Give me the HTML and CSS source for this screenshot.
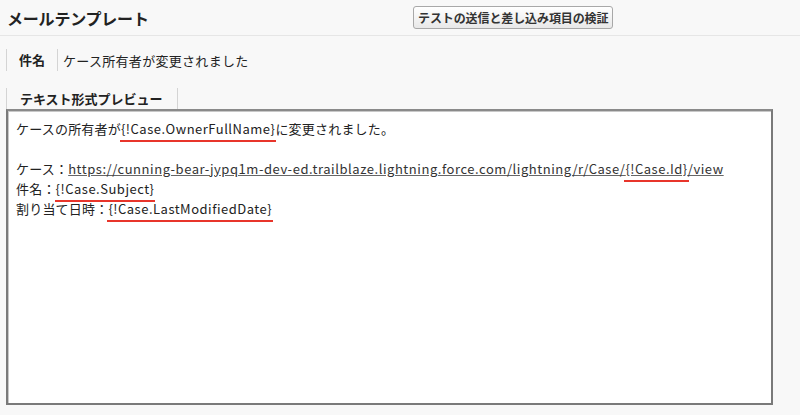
FILE: index.html
```html
<!DOCTYPE html>
<html lang="ja">
<head>
    <meta charset="UTF-8">
    <title>メールテンプレート</title>
    <link rel="stylesheet" href="styles.css">
</head>
<body>
    <div class="page-header">
        <h1 class="title">メールテンプレート</h1>
        <button class="test-button">テストの送信と差し込み項目の検証</button>
    </div>

    <div class="field-row">
        <div class="field-label">件名</div>
        <div class="field-value">ケース所有者が変更されました</div>
    </div>

    <div class="tab-row">
        <div class="tab">テキスト形式プレビュー</div>
    </div>
    <div class="preview">
        <p>ケースの所有者が<span class="mark">{!Case.OwnerFullName}</span>に変更されました。</p>
        <p>&nbsp;</p>
        <p>ケース：<a href="#">https://cunning-bear-jypq1m-dev-ed.trailblaze.lightning.force.com/lightning/r/Case/<span class="mark">{!Case.Id}</span>/view</a></p>
        <p>件名：<span class="mark">{!Case.Subject}</span></p>
        <p>割り当て日時：<span class="mark">{!Case.LastModifiedDate}</span></p>
    </div>
</body>
</html>
```

FILE: styles.css
```css
body {
    margin: 0;
    background-color: #f8f8f8;
    font-family: "Noto Sans CJK JP", "Noto Sans", sans-serif;
    color: #222;
    font-size: 13px;
}
.page-header {
    display: flex;
    align-items: center;
    height: 35px;
    padding: 0 0 0 7px;
    border-bottom: 1px solid #e6e6e6;
}
.title {
    margin: 0;
    width: 406px;
    font-size: 16px;
    font-weight: bold;
    color: #222;
    letter-spacing: -0.2px;
}
.test-button {
    height: 23px;
    padding: 0 4px;
    font-family: inherit;
    font-size: 12px;
    font-weight: bold;
    color: #333;
    background: linear-gradient(#ffffff, #e8e8e8);
    border: 1px solid #a8a8a8;
    border-radius: 3px;
    letter-spacing: -0.1px;
}
.field-row {
    display: flex;
    align-items: center;
    margin: 13px 0 0 6px;
    height: 22px;
    border-left: 1px solid #d4d4d4;
}
.field-label {
    width: 38px;
    padding-left: 12px;
    font-weight: bold;
    border-right: 1px solid #d4d4d4;
    line-height: 22px;
}
.field-value {
    padding-left: 5px;
    letter-spacing: 0.3px;
}
.tab-row {
    display: flex;
    margin: 17px 0 0 6px;
}
.tab {
    width: 157px;
    padding-left: 13px;
    height: 21px;
    line-height: 21px;
    font-weight: bold;
    border-left: 1px solid #d4d4d4;
    border-right: 1px solid #d4d4d4;
}
.preview {
    width: 755px;
    height: 284px;
    margin-left: 6px;
    padding: 8px 0 0 8px;
    background-color: #fff;
    border: 2px solid #7a7a7a;
    border-top-color: #8a8a8a;
    box-shadow: inset 1px 1px 0 #c8c8c8;
}
.preview p {
    margin: 0;
    line-height: 20px;
    letter-spacing: 0.2px;
}
.preview a {
    color: #333;
    text-decoration: underline;
    text-decoration-color: #666;
    letter-spacing: 0.55px;
}
.mark {
    position: relative;
    letter-spacing: 0.5px;
}
.mark::after {
    content: "";
    position: absolute;
    left: -1px;
    right: -1px;
    bottom: -4px;
    height: 2px;
    background-color: #e8352b;
}
```
